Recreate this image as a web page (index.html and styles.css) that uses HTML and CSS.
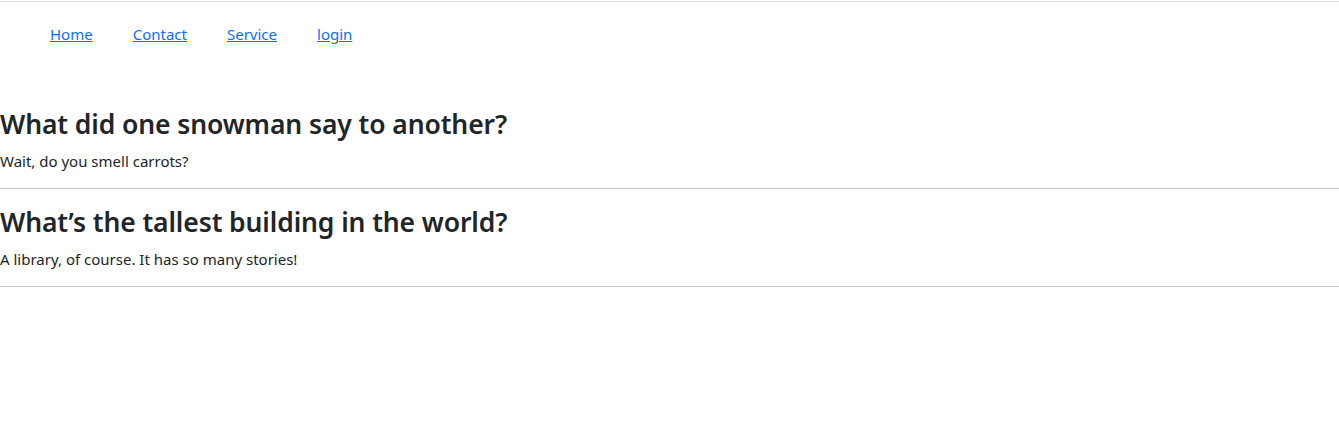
FILE: index.html
```html
<!DOCTYPE html>
<html lang="en">
<head>
<meta charset="utf-8">
<title>Jokes</title>
<link rel="stylesheet" href="styles.css">
</head>
<body>
<header class="site-header">
  <nav class="nav">
    <a class="nav-link" href="#">Home</a>
    <a class="nav-link" href="#">Contact</a>
    <a class="nav-link" href="#">Service</a>
    <a class="nav-link" href="#">login</a>
  </nav>
</header>
<main class="jokes">
  <section class="joke">
    <h3 class="joke-q">What did one snowman say to another?</h3>
    <p class="joke-a">Wait, do you smell carrots?</p>
  </section>
  <section class="joke">
    <h3 class="joke-q">What’s the tallest building in the world?</h3>
    <p class="joke-a">A library, of course. It has so many stories!</p>
  </section>
</main>
</body>
</html>
```
FILE: styles.css
```css
html, body {
  margin: 0;
  padding: 0;
  background: #fff;
}
body {
  font-family: "Noto Sans", "Open Sans", sans-serif;
  font-size: 16px;
  line-height: 24px;
  color: #212529;
}
.site-header {
  margin-top: 1px;
  border-top: 1px solid #dcdcdc;
  padding: 20px 0 0 50px;
}
.nav {
  display: flex;
  gap: 40px;
}
.nav-link {
  color: #0d6efd;
  font-size: 15px;
  line-height: 24px;
  text-decoration: underline;
}
.jokes {
  margin-top: 61px;
}
.joke {
  border-bottom: 1px solid #c8c9ca;
  padding-bottom: 15px;
}
.joke + .joke {
  padding-top: 16px;
}
.joke-q {
  margin: 0 0 8px;
  font-size: 26.5px;
  line-height: 34px;
  font-weight: 600;
  letter-spacing: -0.1px;
}
.joke-a {
  margin: 0;
  font-size: 15px;
  line-height: 24px;
}
```
